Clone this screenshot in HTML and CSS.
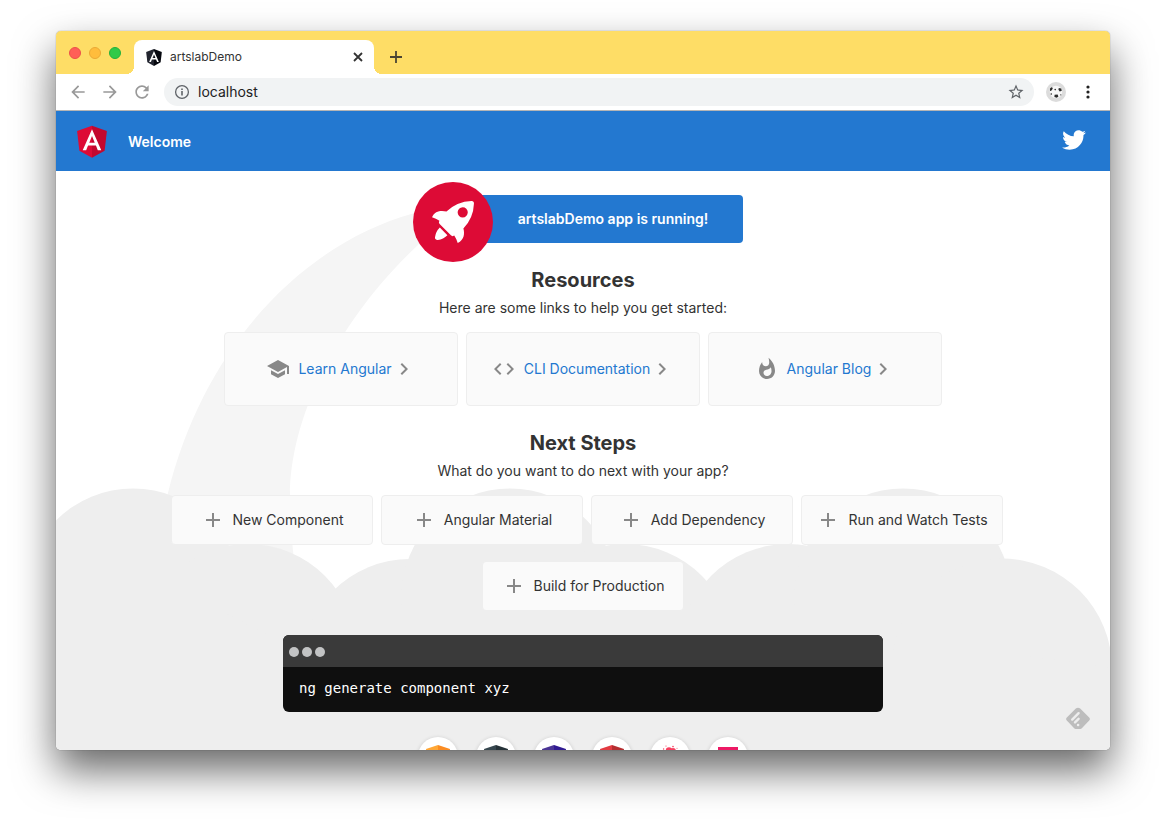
FILE: index.html
```html
<!DOCTYPE html>
<html lang="en">
<head>
<meta charset="utf-8">
<title>artslabDemo</title>
<link rel="stylesheet" href="styles.css">
</head>
<body>
<svg class="defs" aria-hidden="true">
  <symbol id="add" viewBox="0 0 24 24"><path d="M19 13h-6v6h-2v-6H5v-2h6V5h2v6h6v2z"/></symbol>
  <symbol id="chevron" viewBox="0 0 24 24"><path d="M10 6L8.59 7.41 13.17 12l-4.58 4.59L10 18l6-6z"/></symbol>
  <symbol id="letter" viewBox="0 0 250 250"><path d="M125,52.1L66.8,182.6h21.7l11.7-29.2h49.4l11.7,29.2h21.7L125,52.1z M142,135.4H108l17-40.9L142,135.4z"/></symbol>
  <symbol id="left-shield" viewBox="0 0 24 24"><path d="M12 0L0 4l2 15 10 5z"/></symbol>
  <symbol id="right-shield" viewBox="0 0 24 24"><path d="M12 0l12 4-2 15-10 5z"/></symbol>
</svg>
<div class="window">
  <header class="tabstrip">
    <div class="lights">
      <button class="light close" aria-label="Close window"></button>
      <button class="light minimize" aria-label="Minimize window"></button>
      <button class="light maximize" aria-label="Maximize window"></button>
    </div>
    <div class="tab">
      <svg class="favicon" viewBox="31 29 188 202"><path fill="#22252f" d="M125 30L31.9 63.2l14.2 123.1L125 230z"/><path fill="#06080f" d="M125 30v200l78.9-43.7 14.2-123.1z"/><path fill="#fff" d="M125,52.1L66.8,182.6h21.7l11.7-29.2h49.4l11.7,29.2h21.7L125,52.1z M142,135.4H108l17-40.9L142,135.4z"/></svg>
      <span class="tab-title">artslabDemo</span>
      <button class="tab-close" aria-label="Close tab"><svg viewBox="0 0 10 10"><path d="M1 1l8 8M9 1L1 9" stroke="#333" stroke-width="1.8"/></svg></button>
    </div>
    <button class="new-tab" aria-label="New tab"><svg viewBox="0 0 12 12"><path d="M6 0v12M0 6h12" stroke="#4a4433" stroke-width="1.8"/></svg></button>
  </header>
  <div class="navbar">
    <button class="nav-button" aria-label="Back"><svg viewBox="0 0 24 24"><path d="M20 11H7.83l5.59-5.59L12 4l-8 8 8 8 1.41-1.41L7.83 13H20v-2z"/></svg></button>
    <button class="nav-button" aria-label="Forward"><svg viewBox="0 0 24 24"><path d="M12 4l-1.41 1.41L16.17 11H4v2h12.17l-5.58 5.59L12 20l8-8z"/></svg></button>
    <button class="nav-button" aria-label="Reload"><svg viewBox="0 0 24 24"><path d="M17.65 6.35C16.2 4.9 14.21 4 12 4c-4.42 0-7.99 3.58-7.99 8s3.57 8 7.99 8c3.73 0 6.84-2.55 7.73-6h-2.08c-.82 2.33-3.04 4-5.65 4-3.31 0-6-2.69-6-6s2.69-6 6-6c1.66 0 3.14.69 4.22 1.78L13 11h7V4l-2.35 2.35z"/></svg></button>
    <div class="address">
      <svg class="info" viewBox="0 0 16 16"><circle cx="8" cy="8" r="6.4" fill="none" stroke="#5f6368" stroke-width="1.3"/><path d="M7.2 7h1.6v4.4H7.2zM7.2 4.4h1.6V6H7.2z"/></svg>
      <input class="url" type="text" value="localhost" aria-label="Address">
      <button class="star" aria-label="Bookmark"><svg viewBox="0 0 24 24"><path d="M22 9.24l-7.19-.62L12 2 9.19 8.63 2 9.24l5.46 4.73L5.82 21 12 17.27 18.18 21l-1.63-7.03L22 9.24zM12 15.4l-3.76 2.27 1-4.28-3.32-2.88 4.38-.38L12 6.1l1.71 4.04 4.38.38-3.32 2.88 1 4.28L12 15.4z"/></svg></button>
    </div>
    <button class="profile" aria-label="Profile"><svg viewBox="0 0 20 20"><circle cx="10" cy="10" r="10" fill="#dcdcdc"/><circle cx="10" cy="10" r="6.2" fill="#f8f8f8"/><g fill="#2c2c2c"><path d="M4 6.6l2-1.6.8 1.8-1.6 2L4 9zM12.8 6l2.4.4.6 2.4-2 .6-1.4-1.6zM8.6 12.8l3-.4.8 2-1.6 1.4-2.4-.8z"/><circle cx="9.2" cy="7.6" r=".8"/><circle cx="5.3" cy="12" r=".8"/><circle cx="14.8" cy="12.8" r=".6"/></g></svg></button>
    <button class="menu" aria-label="Menu"><svg viewBox="0 0 4 14"><circle cx="2" cy="2" r="1.6"/><circle cx="2" cy="7" r="1.6"/><circle cx="2" cy="12" r="1.6"/></svg></button>
  </div>

  <div class="toolbar">
    <svg class="logo" viewBox="0 0 250 250"><path fill="#dd0b36" d="M125 30L31.9 63.2l14.2 123.1L125 230z"/><path fill="#c3082f" d="M125 30v200l78.9-43.7 14.2-123.1z"/><use href="#letter" fill="#fff"/></svg>
    <span class="welcome">Welcome</span>
    <a class="twitter" href="#" aria-label="Twitter"><svg viewBox="0 0 248 204"><path d="M221.95 51.29v6.53c0 66.73-50.8 143.69-143.69 143.69-27.44.04-54.31-7.82-77.41-22.64 3.99.48 8 .72 12.02.73 22.74.02 44.83-7.61 62.72-21.66-21.61-.41-40.56-14.5-47.18-35.07 7.57 1.46 15.37 1.16 22.8-.87-23.56-4.76-40.51-25.46-40.51-49.5v-.64c7.02 3.91 14.88 6.08 22.92 6.32C11.58 63.31 4.74 33.79 18.14 10.71c25.64 31.55 63.47 50.73 104.08 52.76-4.07-17.54 1.49-35.92 14.61-48.25 20.34-19.12 52.33-18.14 71.45 2.19 11.31-2.23 22.15-6.38 32.07-12.26-3.77 11.69-11.66 21.62-22.2 27.93 10.01-1.18 19.79-3.86 29-7.95-6.78 10.16-15.32 19.01-25.2 26.16z"/></svg></a>
  </div>

  <main class="page">
    <svg class="scenery" viewBox="56 171 1054 579" preserveAspectRatio="xMidYMax slice" aria-hidden="true">
      <path fill="#f5f5f5" d="M453 206L413 213.5C300 245 203 350 168 493Q160 525 158 560H294Q290 525 290 496C290 415 340 318 418 245z"/>
      <g fill="#eee">
        <circle cx="133" cy="597" r="108.6"/><circle cx="248" cy="652.6" r="108.6"/><circle cx="410" cy="667.6" r="108.6"/><circle cx="510" cy="597" r="108.6"/><circle cx="625" cy="652.6" r="108.6"/><circle cx="788" cy="652.6" r="108.6"/><circle cx="903" cy="597" r="108.6"/><circle cx="1002" cy="668.6" r="110"/>
        <path d="M0 600H200L300 652H1000L1112 668V760H0z"/>
      </g>
    </svg>
    <div class="content">
      <div class="highlight">
        <svg class="rocket" viewBox="0 0 101.678 101.678"><circle cx="50.839" cy="50.839" r="50.839" fill="#dd0b36"/><g fill="#fff" transform="translate(24.185 24.185)"><path d="M3.4,42.615a3.084,3.084,0,0,0,3.553,3.553,21.419,21.419,0,0,0,12.215-6.107L9.511,30.4A21.419,21.419,0,0,0,3.4,42.615Z" transform="translate(0.371 3.363)"/><path d="M53.3,3.221A3.09,3.09,0,0,0,50.081,0,48.227,48.227,0,0,0,18.322,13.437c-6-1.666-14.991-1.221-18.322,7.218A33.892,33.892,0,0,1,9.439,25.1l-.333.666a3.013,3.013,0,0,0,.555,3.553L23.985,43.641a2.9,2.9,0,0,0,3.553.555l.666-.333A33.892,33.892,0,0,1,32.647,53.3c8.55-3.664,8.884-12.326,7.218-18.322A48.227,48.227,0,0,0,53.3,3.221ZM34.424,9.772a6.439,6.439,0,1,1,9.106,9.106,6.368,6.368,0,0,1-9.106,0A6.467,6.467,0,0,1,34.424,9.772Z"/></g></svg>
        <span>artslabDemo app is running!</span>
      </div>

      <h2>Resources</h2>
      <p>Here are some links to help you get started:</p>
      <div class="cards">
        <a class="card link" href="#"><svg class="icon" viewBox="0 0 24 24"><path d="M5 13.18v4L12 21l7-3.82v-4L12 17l-7-3.82zM12 3L1 9l11 6 9-4.91V17h2V9L12 3z"/></svg><span>Learn Angular</span><svg class="icon"><use href="#chevron"/></svg></a>
        <a class="card link" href="#"><svg class="icon" viewBox="0 0 24 24"><path d="M9.4 16.6L4.8 12l4.6-4.6L8 6l-6 6 6 6 1.4-1.4zm5.2 0l4.6-4.6-4.6-4.6L16 6l6 6-6 6-1.4-1.4z"/></svg><span>CLI Documentation</span><svg class="icon"><use href="#chevron"/></svg></a>
        <a class="card link" href="#"><svg class="icon" viewBox="0 0 24 24"><path d="M13.5.67s.74 2.65.74 4.8c0 2.06-1.35 3.73-3.41 3.73-2.07 0-3.63-1.67-3.63-3.73l.03-.36C5.21 7.51 4 10.62 4 14c0 4.42 3.58 8 8 8s8-3.58 8-8C20 8.61 17.41 3.8 13.5.67zM11.71 19c-1.78 0-3.22-1.4-3.22-3.14 0-1.62 1.05-2.76 2.81-3.12 1.77-.36 3.6-1.21 4.62-2.58.39 1.29.59 2.65.59 4.04 0 2.65-2.15 4.8-4.8 4.8z"/></svg><span>Angular Blog</span><svg class="icon"><use href="#chevron"/></svg></a>
      </div>

      <h2>Next Steps</h2>
      <p>What do you want to do next with your app?</p>
      <div class="cards">
        <button class="card small"><svg class="icon"><use href="#add"/></svg><span>New Component</span></button>
        <button class="card small"><svg class="icon"><use href="#add"/></svg><span>Angular Material</span></button>
        <button class="card small"><svg class="icon"><use href="#add"/></svg><span>Add Dependency</span></button>
        <button class="card small"><svg class="icon"><use href="#add"/></svg><span>Run and Watch Tests</span></button>
        <button class="card small"><svg class="icon"><use href="#add"/></svg><span>Build for Production</span></button>
      </div>

      <div class="terminal">
        <div class="terminal-bar"><i></i><i></i><i></i></div>
        <pre>ng generate component xyz</pre>
      </div>

      <div class="circles">
        <a class="circle" href="#" aria-label="Animations"><svg viewBox="0 0 24 24"><use href="#left-shield" fill="#ffa736"/><use href="#right-shield" fill="#fb8c23"/></svg></a>
        <a class="circle" href="#" aria-label="CLI"><svg viewBox="0 0 24 24"><use href="#left-shield" fill="#37474f"/><use href="#right-shield" fill="#263238"/></svg></a>
        <a class="circle" href="#" aria-label="Augury"><svg viewBox="0 0 24 24"><use href="#left-shield" fill="#4a3595"/><use href="#right-shield" fill="#311b92"/></svg></a>
        <a class="circle" href="#" aria-label="Protractor"><svg viewBox="0 0 24 24"><use href="#left-shield" fill="#e23b42"/><use href="#right-shield" fill="#b52e31"/></svg></a>
        <a class="circle" href="#" aria-label="Meetup"><svg viewBox="0 0 24 24" fill="#f64060"><circle cx="12" cy="12" r="8"/><circle cx="11" cy="5.4" r="3.2"/><circle cx="15" cy="6" r="3"/><circle cx="8" cy="1" r=".6"/><circle cx="15" cy="1.6" r=".8"/><circle cx="5.6" cy="4" r=".7"/><circle cx="19" cy="3.2" r=".5"/></svg></a>
        <a class="circle" href="#" aria-label="Gitter"><svg viewBox="0 0 24 24"><path fill="#ed1965" d="M2 2h20v20H2z"/></svg></a>
      </div>
    </div>
    <button class="feedly" aria-label="Follow on feedly"><svg viewBox="0 0 24 24"><path fill="#bdbdbd" d="M9.8 1.6Q12 0 14.2 1.6L23.2 10.6Q24.6 12 23.2 13.6L15.6 21.6Q15 22 14.4 22H9.6Q9 22 8.4 21.6L.8 13.6Q-.6 12 .8 10.6z"/><g stroke="#eee" stroke-width="2.4" stroke-linecap="round"><path d="M6.2 12.6L12.6 6.2M9 15.4L12.6 11.8M12 18h.2"/></g></svg></button>
  </main>
</div>
</body>
</html>
```
FILE: styles.css
```css
* { box-sizing: border-box; }

body {
  margin: 0;
  height: 100vh;
  padding: 31px 56px 80px;
  background: #fff;
  color: #333;
  font-family: Inter, "Open Sans", sans-serif;
  font-size: 14px;
  line-height: 17px;
  overflow: hidden;
}

button {
  border: 0;
  padding: 0;
  background: none;
  color: inherit;
  font: inherit;
}

svg { display: block; flex: none; }

.defs { position: absolute; width: 0; height: 0; }

.window {
  display: flex;
  flex-direction: column;
  height: 100%;
  border-radius: 5px;
  overflow: hidden;
  box-shadow: 0 0 1px rgba(0, 0, 0, .6), 0 20px 40px rgba(0, 0, 0, .6);
}

.tabstrip {
  display: flex;
  flex: none;
  height: 43px;
  padding-left: 13px;
  background: #fedd66;
}

.lights { display: flex; gap: 8px; padding-top: 16px; width: 65px; }
.light { width: 12px; height: 12px; border-radius: 50%; }
.close { background: #ff5f57; border: 1px solid #ec5149; }
.minimize { background: #ffbd3c; border: 1px solid #eba935; }
.maximize { background: #30ca48; border: 1px solid #24b03c; }

.tab {
  position: relative;
  display: flex;
  align-items: center;
  width: 240px;
  height: 34px;
  margin-top: 9px;
  padding: 0 11px 0 12px;
  border-radius: 8px 8px 0 0;
  background: #fff;
  color: #333;
  font-size: 12px;
}

.tab::before,
.tab::after {
  content: "";
  position: absolute;
  bottom: 0;
  width: 8px;
  height: 8px;
}
.tab::before { right: 100%; background: radial-gradient(circle at 0 0, transparent 8px, #fff 8px); }
.tab::after { left: 100%; background: radial-gradient(circle at 100% 0, transparent 8px, #fff 8px); }

.favicon { width: 16px; height: 17px; }
.tab-title { flex: 1; margin-left: 8px; padding-bottom: 1px; }
.tab-close svg { width: 10px; height: 10px; }
.new-tab { margin: 8px 0 0 16px; }
.new-tab svg { width: 12px; height: 12px; }

.navbar {
  display: flex;
  flex: none;
  align-items: center;
  height: 37px;
  padding: 0 20px 0 12px;
  border-bottom: 1px solid #b5b5b5;
  background: #fff;
}

.nav-button { margin-right: 12px; }
.nav-button svg { width: 20px; height: 20px; fill: #999; }

.address {
  display: flex;
  flex: 1;
  align-items: center;
  height: 28px;
  padding: 0 9px 0 10px;
  border-radius: 14px;
  background: #f1f3f4;
}
.info { width: 16px; height: 16px; fill: #5f6368; }
.url {
  flex: 1;
  min-width: 0;
  padding: 0 8px 1px;
  border: 0;
  background: none;
  color: #222;
  font: inherit;
}
.star svg { width: 18px; height: 18px; fill: #5f6368; }
.profile { margin-left: 12px; }
.profile svg { width: 20px; height: 20px; }
.menu { margin-left: 20px; }
.menu svg { width: 4px; height: 14px; fill: #222; }

.toolbar {
  display: flex;
  flex: none;
  align-items: center;
  height: 60px;
  padding: 0 24px 0 16px;
  background: #2378d0;
  color: #fff;
  font-weight: 600;
}
.logo { width: 40px; height: 40px; }
.welcome { flex: 1; margin-left: 16px; }
.twitter svg { width: 24px; height: 20px; margin-bottom: 2px; fill: #fff; }

.page {
  position: relative;
  flex: 1;
  min-height: 0;
  overflow: hidden;
  background: #fff;
}

.scenery { position: absolute; inset: 0; width: 100%; height: 100%; }

.content {
  position: relative;
  display: flex;
  flex-direction: column;
  align-items: center;
  max-width: 960px;
  margin: 0 auto;
  padding: 24px 16px;
}

.highlight {
  position: relative;
  display: flex;
  align-items: center;
  justify-content: center;
  width: 320px;
  height: 48px;
  margin-bottom: 16px;
  padding: 0 0 1px 60px;
  border-radius: 4px;
  background: #2378d0;
  color: #fff;
  font-weight: 600;
}
.rocket { position: absolute; left: -10px; top: -13px; width: 80px; height: 80px; }

h2 { margin: 9px 0 7px; font-size: 20px; line-height: 24px; font-weight: 700; }
p { margin: 0; }

.cards {
  display: flex;
  flex-wrap: wrap;
  justify-content: center;
  margin-top: 16px;
}

.card {
  display: flex;
  align-items: center;
  justify-content: center;
  margin: 0 0 16px 8px;
  border: 1px solid #eee;
  border-radius: 4px;
  background: #fafafa;
}
.card:last-child { margin-right: 8px; }
.card span { margin-left: 8px; padding-bottom: 1px; }
.link { width: 234px; height: 74px; color: #2378d0; text-decoration: none; }
.small { width: 202px; height: 50px; }
.icon { width: 24px; height: 24px; fill: #888; }

.terminal {
  width: 600px;
  max-width: 100%;
  margin-top: 8px;
  border-radius: 6px;
  overflow: hidden;
  background: #0f0f0f;
  color: #fff;
}
.terminal-bar {
  display: flex;
  align-items: center;
  gap: 3px;
  height: 32px;
  padding: 2px 6px 0;
  background: #3a3a3a;
}
.terminal-bar i { width: 10px; height: 10px; border-radius: 50%; background: #c2c3c4; }
.terminal pre {
  margin: 0;
  padding: 13px 16px 15px;
  font-family: "DejaVu Sans Mono", monospace;
}

.circles { display: flex; gap: 18px; margin-top: 25px; }
.circle {
  display: flex;
  align-items: center;
  justify-content: center;
  width: 40px;
  height: 40px;
  border-radius: 50%;
  background: #fff;
  box-shadow: 0 1px 4px rgba(0, 0, 0, .18);
}
.circle svg { width: 24px; height: 24px; }

.feedly { position: absolute; right: 20px; bottom: 19px; }
.feedly svg { width: 24px; height: 24px; }
```
